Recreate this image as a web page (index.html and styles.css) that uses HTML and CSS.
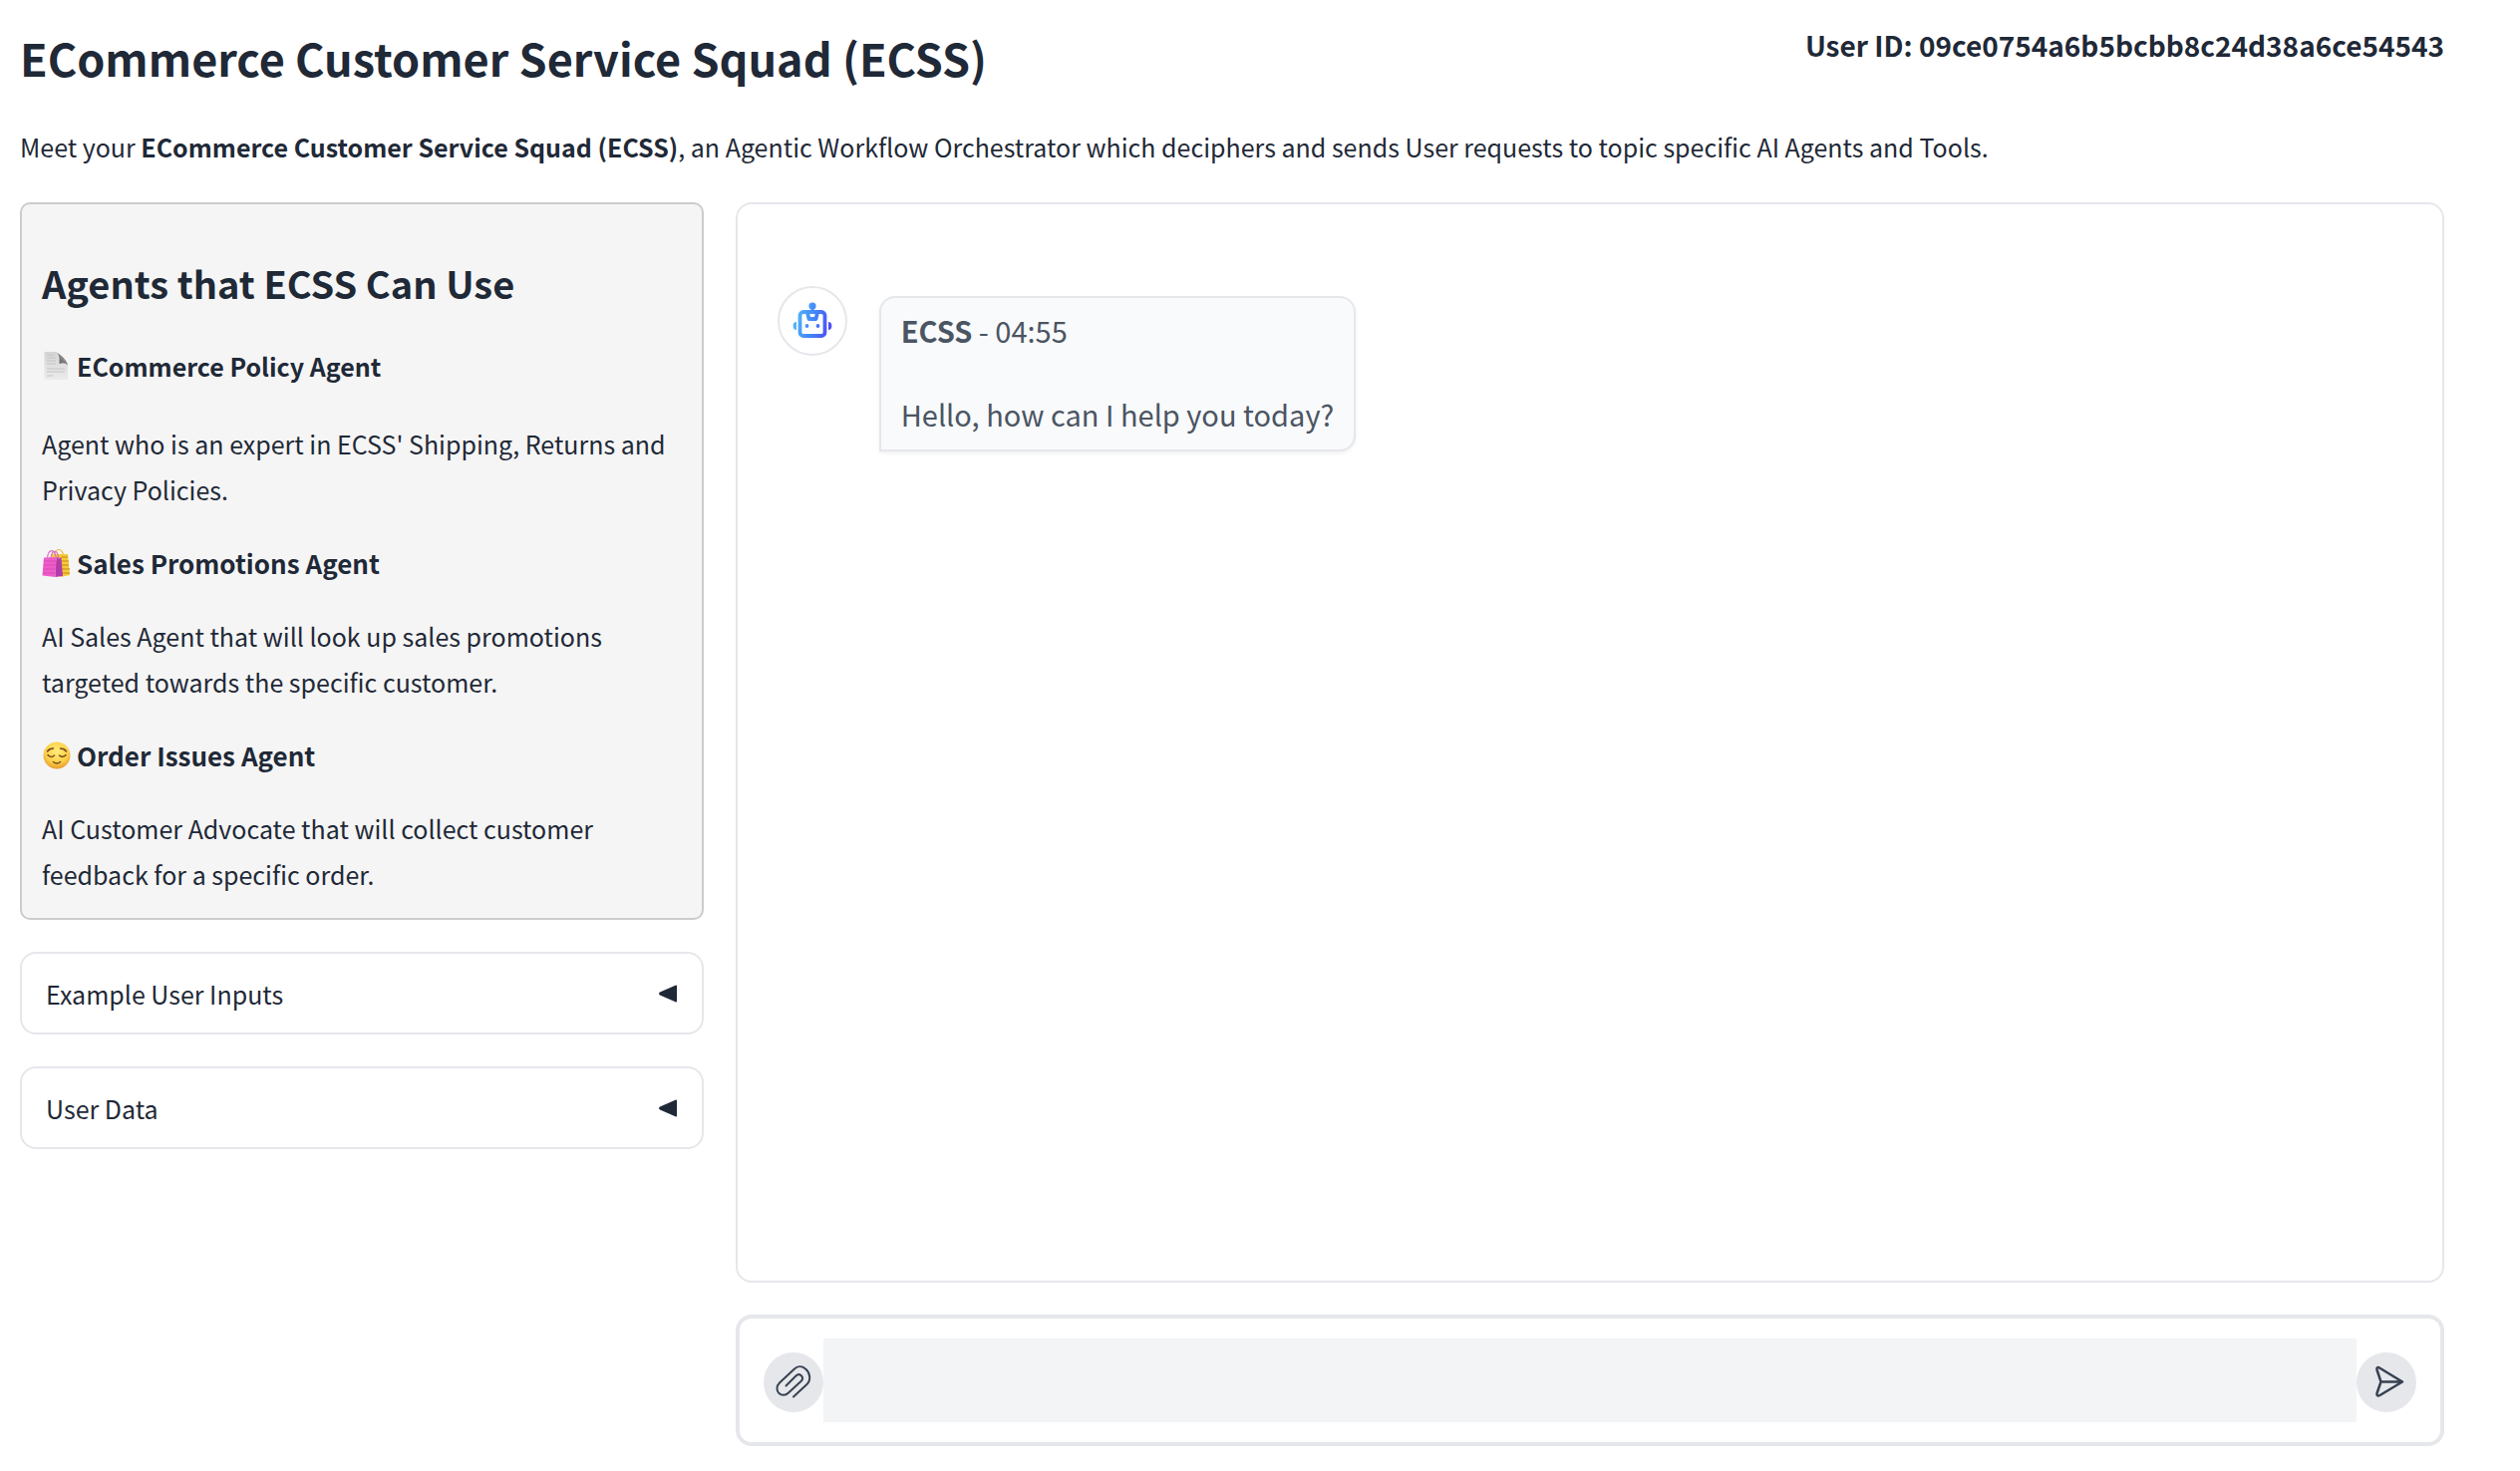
FILE: index.html
```html
<!DOCTYPE html>
<html lang="en">
<head>
<meta charset="utf-8">
<meta name="viewport" content="width=device-width, initial-scale=1">
<title>ECommerce Customer Service Squad (ECSS)</title>
<link rel="stylesheet" href="styles.css">
</head>
<body>
<div class="app">
  <header class="header">
    <h1 class="title">ECommerce Customer Service Squad (ECSS)</h1>
    <p class="user-id">User ID: 09ce0754a6b5bcbb8c24d38a6ce54543</p>
  </header>
  <p class="intro">Meet your <strong>ECommerce Customer Service Squad (ECSS)</strong>, an Agentic Workflow Orchestrator which deciphers and sends User requests to topic specific AI Agents and Tools.</p>
  <div class="columns">
    <aside class="sidebar">
      <section class="agents">
        <h2 class="agents-title">Agents that ECSS Can Use</h2>
        <h3 class="agent-name agent-name-lead">
          <svg class="emoji" viewBox="0 0 30 30" aria-hidden="true">
            <defs>
              <linearGradient id="paper" x1="0" y1="0" x2="0" y2="1"><stop offset="0" stop-color="#d6d6d6"/><stop offset="1" stop-color="#ebebeb"/></linearGradient>
              <linearGradient id="curl" x1="0" y1="1" x2="1" y2="0"><stop offset="0" stop-color="#444"/><stop offset="1" stop-color="#bbb"/></linearGradient>
            </defs>
            <path d="M2.500 1H14c3 1 4 4 4 8 3 0 7 1 8 5v15H2.500z" fill="url(#paper)"/>
            <path d="M13 1c4 1 5 5 4.500 12 3-1.500 6-1 8.500 1.500C25.500 10 19 3 13 1z" fill="url(#curl)"/>
            <path d="M5 4h8M5 7h9M5 10h9M5 13h9M5 18h18M5 21h18M5 25h6" stroke="#c4c4c4" stroke-width="1" fill="none"/>
          </svg>ECommerce Policy Agent</h3>
        <p class="agent-text">Agent who is an expert in ECSS' Shipping, Returns and Privacy Policies.</p>
        <h3 class="agent-name">
          <svg class="emoji" viewBox="0 0 30 30" aria-hidden="true">
            <path d="M12 9c0-9 9-11 10 0" fill="none" stroke="#e8b93a" stroke-width="1.200"/>
            <path d="M9 6h17l2 21-9 2z" fill="#f3cb35"/>
            <path d="M19 9h7M19 13h8M20 17h7M20 21h8M20 25h8" stroke="#d99a28" stroke-width="1.300"/>
            <path d="M2 9.500 14.500 9 13.500 29 .5 27.500z" fill="#ee5cc8"/>
            <path d="M14.500 9 19.500 10l1.500 18-7.500 1z" fill="#b23ba9"/>
            <path d="M2 13h12M1.500 17h12M1.500 21h12M1 25h12.500" stroke="#d84ab8" stroke-width="1"/>
            <path d="M5.500 12c0-12 8-13 9 0M9 10c1-9 7-9 8 1" fill="none" stroke="#dc72c0" stroke-width="1.200"/>
          </svg>Sales Promotions Agent</h3>
        <p class="agent-text">AI Sales Agent that will look up sales promotions targeted towards the specific customer.</p>
        <h3 class="agent-name">
          <svg class="emoji" viewBox="0 0 30 30" aria-hidden="true">
            <defs><radialGradient id="face" cx=".5" cy=".35" r=".65"><stop offset="0" stop-color="#ffec7a"/><stop offset=".65" stop-color="#fbd04a"/><stop offset="1" stop-color="#e99b2b"/></radialGradient></defs>
            <circle cx="15" cy="15" r="13.500" fill="url(#face)"/>
            <path d="M5.500 11q2-3 6-3M24.500 11q-2-3-6-3M6 14.500q3 3.500 6.500.5M24 14.500q-3 3.500-6.500.5M11.500 21.500q3.500 3 7 0" fill="none" stroke="#7a4a1a" stroke-width="1.500" stroke-linecap="round"/>
          </svg>Order Issues Agent</h3>
        <p class="agent-text">AI Customer Advocate that will collect customer feedback for a specific order.</p>
      </section>
      <button class="accordion" type="button" aria-expanded="false">
        <span>Example User Inputs</span>
        <svg class="arrow" viewBox="0 0 18 18" aria-hidden="true"><path d="M18 1.500v15q0 1.500-1.500.8L1 10.500q-2-1.500 0-3L16.500.7Q18 0 18 1.500z" fill="#1f2937"/></svg>
      </button>
      <button class="accordion" type="button" aria-expanded="false">
        <span>User Data</span>
        <svg class="arrow" viewBox="0 0 18 18" aria-hidden="true"><path d="M18 1.500v15q0 1.500-1.500.8L1 10.500q-2-1.500 0-3L16.500.7Q18 0 18 1.500z" fill="#1f2937"/></svg>
      </button>
    </aside>
    <main class="main">
      <section class="chat" aria-label="Chat">
        <div class="message">
          <div class="avatar">
            <svg class="robot" viewBox="0 0 40 40" role="img" aria-label="ECSS">
              <defs><linearGradient id="bot" gradientUnits="userSpaceOnUse" x1="0" y1="16" x2="40" y2="26"><stop offset="0" stop-color="#55bdf8"/><stop offset=".5" stop-color="#4387f8"/><stop offset="1" stop-color="#5148f2"/></linearGradient></defs>
              <g fill="url(#bot)">
                <circle cx="20" cy="5" r="3.600"/>
                <rect x="18.500" y="6" width="3" height="7"/>
                <path d="M4 21v8C1.800 29 .6 27.500 .6 25S1.800 21 4 21zM36 21v8c2.200 0 3.400-1.500 3.400-4S38.200 21 36 21z"/>
                <circle cx="14.500" cy="25" r="1.900"/><circle cx="25.500" cy="25" r="1.900"/>
              </g>
              <g fill="none" stroke="url(#bot)" stroke-width="3.800" stroke-linejoin="round">
                <rect x="7.500" y="11" width="25" height="24" rx="3.500"/>
                <path d="M15 11.500l1.500 6.500h7l1.500-6.500"/>
              </g>
            </svg>
          </div>
          <div class="bubble">
            <p class="line"><strong>ECSS</strong> - 04:55</p>
            <p class="line">Hello, how can I help you today?</p>
          </div>
        </div>
      </section>
      <form class="composer">
        <button class="round" type="button" aria-label="Attach file">
          <svg class="icon" viewBox="0 0 36 36" aria-hidden="true"><path d="M18 32.500 31.500 20C36 15.500 34.500 8 30 4.500c-3.500-3-8-3-11 0L4 18.500c-3.500 3.500-3 8-.5 10.500s6.500 2.500 9.500-.5L25.500 17c4-4-1-9-5-5.500L10.500 21.500" fill="none" stroke="#374151" stroke-width="2" stroke-linecap="round" stroke-linejoin="round"/></svg>
        </button>
        <input class="field" type="text" aria-label="Message">
        <button class="round" type="submit" aria-label="Send">
          <svg class="icon" viewBox="0 0 36 36" aria-hidden="true"><path d="M12.500 17.500 8.500 5.500c-.6-2 1-3 2.500-2L34 17.500 11.500 31C9.500 32 8 31 8.500 29zH34" fill="none" stroke="#374151" stroke-width="2.500" stroke-linecap="round" stroke-linejoin="round"/></svg>
        </button>
      </form>
    </main>
  </div>
</div>
</body>
</html>
```
FILE: styles.css
```css
* { box-sizing: border-box; margin: 0; }
body {
  background: #fff;
  color: #1f2937;
  font-family: "Noto Sans CJK SC", "Noto Sans", sans-serif;
  font-size: 25px;
  line-height: 46px;
}
.app { padding: 18px 76px 24px 20px; }
.header { display: flex; justify-content: space-between; align-items: flex-start; }
.title { font-size: 45px; line-height: 80px; font-weight: 700; }
.user-id { font-size: 28px; line-height: 54px; font-weight: 700; }
.intro { margin: 26px 0 33px; }
.columns { display: grid; grid-template-columns: 2fr 5fr; gap: 32px; align-items: start; }
.sidebar, .main { display: flex; flex-direction: column; gap: 32px; min-width: 0; }
.agents { padding: 51px 20px 21px; background: #f5f5f5; border: 2px solid #ccc; border-radius: 10px; }
.agents-title { font-size: 38px; line-height: 56px; margin-bottom: 32px; }
.agent-name { display: flex; align-items: center; gap: 5px; font-size: 26px; margin-bottom: 27px; }
.agent-name-lead { font-size: 25px; margin-bottom: 32px; }
.agent-text + .agent-name { margin-top: 28px; }
.emoji { width: 30px; height: 30px; flex: none; }
.accordion {
  display: flex; justify-content: space-between; align-items: center;
  min-height: 83px; padding: 16px 25px 16px 24px; background: #fff;
  border: 2px solid #e5e7eb; border-radius: 16px;
  color: inherit; font: inherit; text-align: left;
}
.arrow { width: 18px; height: 18px; }
.chat { min-height: 1084px; padding: 82px 40px; border: 2px solid #e5e7eb; border-radius: 16px; }
.message { display: flex; align-items: flex-start; gap: 32px; }
.avatar {
  display: flex; align-items: center; justify-content: center; flex: none;
  width: 70px; height: 70px; border: 2px solid #e5e7eb; border-radius: 50%;
}
.robot { width: 40px; height: 40px; }
.bubble {
  margin-top: 10px; padding: 10px 20px 14px; color: #4b5563; background: #f9fafb;
  border: 2px solid #e5e7eb; border-radius: 16px 16px 16px 0;
  box-shadow: 0 2px 4px rgba(0, 0, 0, .06);
  font-size: 29px; line-height: 44px;
}
.line + .line { margin-top: 40px; }
.composer { display: flex; align-items: flex-end; padding: 20px 24px; border: 4px solid #e5e7eb; border-radius: 16px; }
.round {
  display: flex; align-items: center; justify-content: center; flex: none;
  width: 60px; height: 60px; margin-bottom: 10px; padding: 0; border: 0; border-radius: 50%; background: #e5e7eb;
}
.icon { width: 36px; height: 36px; }
.field { flex: 1; min-width: 0; height: 84px; padding: 0 20px; border: 0; background: #f3f4f6; color: inherit; font: inherit; }
```
